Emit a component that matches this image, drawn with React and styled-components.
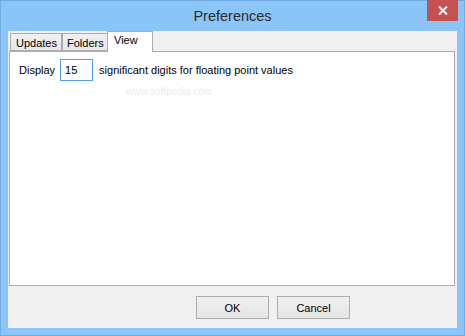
import React from "react";
import styled, { createGlobalStyle } from "styled-components";

const Global = createGlobalStyle`
  html, body { margin: 0; padding: 0; background: #8bc5f8; }
  body { font-family: "Liberation Sans", Arial, sans-serif; }
`;

const Window = styled.div`
  width: 465px;
  height: 336px;
  box-sizing: border-box;
  border: 1px solid #70abe2;
  background: #8bc5f8;
  padding: 0 7px 7px 7px;
  display: flex;
  flex-direction: column;
`;

const TitleBar = styled.div`
  height: 30px;
  position: relative;
  display: flex;
  align-items: center;
  justify-content: center;
`;

const Title = styled.div`
  font-size: 14.5px;
  color: #2b2b2b;
  margin-top: 0px;
`;

const CloseButton = styled.div`
  position: absolute;
  top: -1px;
  right: -1px;
  width: 31px;
  height: 21px;
  background: #c75050;
  display: flex;
  align-items: center;
  justify-content: center;
`;

const Client = styled.div`
  flex: 1;
  background: #f0f0f0;
  display: flex;
  flex-direction: column;
`;

const TabStrip = styled.div`
  display: flex;
  align-items: flex-end;
  height: 20px;
  padding-left: 2px;
  position: relative;
  z-index: 1;
`;

const Tab = styled.div`
  box-sizing: border-box;
  height: ${(p) => (p.$active ? "21px" : "18px")};
  margin-bottom: ${(p) => (p.$active ? "-1px" : "0")};
  width: ${(p) => p.$w}px;
  margin-left: ${(p) => p.$ml || 0}px;
  border: 1px solid #acacac;
  border-bottom: ${(p) => (p.$active ? "none" : "1px solid #acacac")};
  background: ${(p) => (p.$active ? "#ffffff" : "linear-gradient(#f0f0f0, #e8e8e8)")};
  font-size: 11px;
  color: #000;
  padding-left: ${(p) => p.$pl}px;
  line-height: ${(p) => (p.$active ? "17px" : "18px")};
  white-space: nowrap;
`;

const Panel = styled.div`
  box-sizing: border-box;
  height: 235px;
  margin: 0 2px 0 1px;
  background: #fff;
  border: 1px solid #acacac;
  padding: 7px 0 0 9px;
  position: relative;
`;

const Row = styled.div`
  display: flex;
  align-items: center;
  font-size: 11px;
  color: #000;
`;

const Input = styled.div`
  box-sizing: border-box;
  width: 33px;
  height: 22px;
  border: 1px solid #569de5;
  margin: 0 6px 0 5px;
  padding-left: 4px;
  line-height: 20px;
  font-size: 11px;
`;

const Watermark = styled.div`
  position: absolute;
  left: 116px;
  top: 34px;
  font-size: 10px;
  color: #ebebeb;
`;

const Footer = styled.div`
  flex: 1;
  display: flex;
  align-items: flex-start;
  padding: 10px 0 0 188px;
  gap: 8px;
`;

const Button = styled.div`
  box-sizing: border-box;
  width: 73px;
  height: 23px;
  border: 1px solid #adadad;
  background: linear-gradient(#f0f0f0, #e5e5e5);
  font-size: 11px;
  color: #000;
  display: flex;
  align-items: center;
  justify-content: center;
`;

export default function App() {
  return (
    <>
      <Global />
      <Window>
        <TitleBar>
          <Title>Preferences</Title>
          <CloseButton>
            <svg width="10" height="9" viewBox="0 0 10 9">
              <path d="M1 0.5 L9 8.5 M9 0.5 L1 8.5" stroke="#fff" strokeWidth="2" />
            </svg>
          </CloseButton>
        </TitleBar>
        <Client>
          <TabStrip>
            <Tab $w={52} $pl={5}>Updates</Tab>
            <Tab $w={46} $pl={4}>Folders</Tab>
            <Tab $w={46} $ml={-1} $pl={6} $active>View</Tab>
          </TabStrip>
          <Panel>
            <Row>
              Display
              <Input>15</Input>
              significant digits for floating point values
            </Row>
            <Watermark>www.softpedia.com</Watermark>
          </Panel>
          <Footer>
            <Button>OK</Button>
            <Button>Cancel</Button>
          </Footer>
        </Client>
      </Window>
    </>
  );
}
